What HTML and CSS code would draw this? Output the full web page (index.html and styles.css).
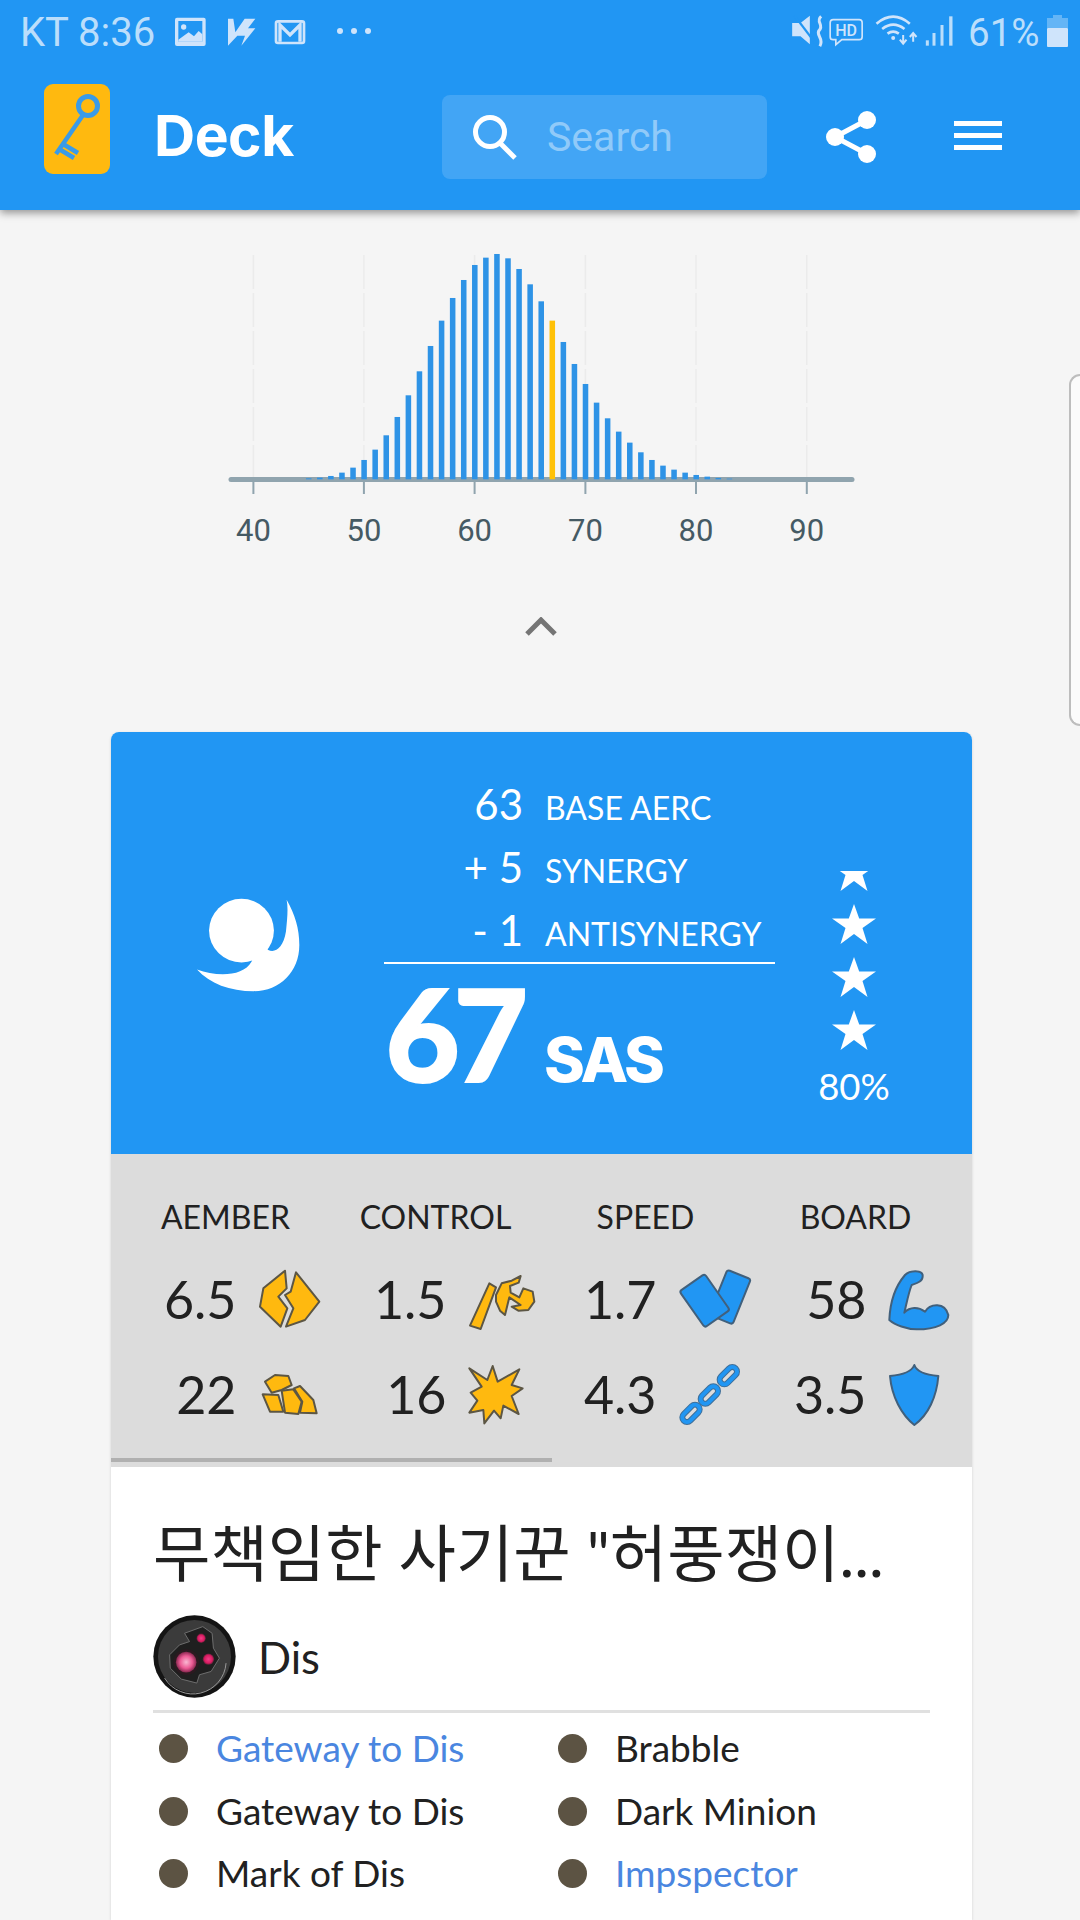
FILE: index.html
```html
<!DOCTYPE html>
<html lang="ko">
<head>
<meta charset="utf-8">
<title>Deck</title>
<link rel="stylesheet" href="styles.css">
</head>
<body>
<div class="page">
  <header class="appbar">
    <div class="status">
      <span class="status-text status-time">KT 8:36</span>
      <svg class="status-left" viewBox="525 50 600 90" aria-hidden="true">
        <rect x="525" y="52" width="92" height="85" rx="6" class="si"/>
        <rect x="535" y="62" width="72" height="62" fill="#2196f3"/>
        <circle cx="551" cy="80" r="8" class="si"/>
        <path d="M535 118 L566 96 L582 108 L596 92 L607 102 V124 H535Z" class="si"/>
        <path d="M684 55 H700 L706 96 L734 55 H766 L744 84 H766 L724 136 L735 106 H712 L684 136Z" class="si"/>
        <rect x="828" y="63" width="84" height="65" rx="6" fill="none" stroke="#cfe4fb" stroke-width="8"/>
        <path d="M840 124 V74 L870 104 L900 74 V124" fill="none" stroke="#cfe4fb" stroke-width="10"/>
        <circle cx="1020" cy="92" r="9" class="si"/><circle cx="1062" cy="92" r="9" class="si"/><circle cx="1104" cy="92" r="9" class="si"/>
      </svg>
      <svg class="status-right" viewBox="35 40 485 105" aria-hidden="true">
        <path d="M35 70 H60 L88 48 V134 L60 110 H35Z" class="si"/>
        <path d="M42 48 L112 140" stroke="#2196f3" stroke-width="7"/>
        <path d="M122 50 C104 66 132 76 116 92 C104 106 132 116 118 140" fill="none" stroke="#cfe4fb" stroke-width="9"/>
        <path d="M158 60 H236 Q245 60 245 69 V111 Q245 120 236 120 H184 L166 135 V120 H158 Q149 120 149 111 V69 Q149 60 158 60Z" fill="none" stroke="#cfe4fb" stroke-width="5"/>
        <text x="197" y="108" class="hd">HD</text>
        <path d="M288 72 Q338 30 388 72 M305 88 Q338 62 372 88 M321 102 Q338 90 355 102" fill="none" stroke="#cfe4fb" stroke-width="8"/>
        <circle cx="338" cy="115" r="6" class="si"/>
        <path d="M368 106 V130 M358 120 L368 132 L378 120 M398 126 V102 M388 112 L398 100 L408 112" fill="none" stroke="#cfe4fb" stroke-width="6"/>
        <rect x="436" y="122" width="9" height="16" class="sb"/><rect x="456" y="100" width="9" height="38" class="sb"/><rect x="480" y="76" width="9" height="62" class="sb"/><rect x="506" y="50" width="10" height="88" class="sb"/>
      </svg>
      <span class="status-text status-pct">61%</span>
      <svg class="battery" viewBox="0 0 21 32" aria-hidden="true">
        <rect x="6" y="0" width="9" height="4" fill="#64b5f6"/>
        <rect x="0" y="3" width="21" height="10" fill="#64b5f6"/>
        <rect x="0" y="13" width="21" height="19" rx="1" fill="#cfe4fb"/>
      </svg>
    </div>
    <div class="toolbar">
      <div class="logo">
        <svg viewBox="0 0 66 90" class="logo-key" aria-hidden="true">
          <circle cx="44" cy="22" r="9.5" fill="none" stroke="#3a9be8" stroke-width="5"/>
          <path d="M39 31 L12 70 M19 60 L34 69 M15 65 L30 74" fill="none" stroke="#3a9be8" stroke-width="4.5"/>
        </svg>
      </div>
      <div class="brand">Deck</div>
      <div class="search">
        <svg class="search-icon" viewBox="0 0 46 46" aria-hidden="true">
          <circle cx="18" cy="18" r="14.5" fill="none" stroke="#fff" stroke-width="5"/>
          <path d="M28 29 L43 44" stroke="#fff" stroke-width="5"/>
        </svg>
        <span class="search-text">Search</span>
      </div>
      <svg class="share" viewBox="0 0 50 54" aria-hidden="true">
        <path d="M41 10 L9 27 L41 44" fill="none" stroke="#fff" stroke-width="5"/>
        <circle cx="41" cy="10" r="9" fill="#fff"/><circle cx="9" cy="27" r="9" fill="#fff"/><circle cx="41" cy="44" r="9" fill="#fff"/>
      </svg>
      <div class="burger"><span></span><span></span><span></span></div>
    </div>
  </header>

  <svg class="chart" viewBox="0 210 1080 350" role="img" aria-label="SAS distribution">
    <g class="grid-lines">
      <path d="M253.4 255V480M363.9 255V480M474.6 255V480M585.4 255V480M696 255V480M806.8 255V480"/>
    </g>
    <path class="axis" d="M231 479.5H852"/>
    <g transform="translate(253.4 479.3) scale(11.07 -0.3333)" class="bars">
      <rect x="4.75" width=".5" height="3"/><rect x="5.75" width=".5" height="5"/><rect x="6.75" width=".5" height="10"/><rect x="7.75" width=".5" height="20"/><rect x="8.75" width=".5" height="35"/>
      <rect x="9.75" width=".5" height="58"/><rect x="10.75" width=".5" height="89"/><rect x="11.75" width=".5" height="132"/><rect x="12.75" width=".5" height="187"/><rect x="13.75" width=".5" height="252"/>
      <rect x="14.75" width=".5" height="324"/><rect x="15.75" width=".5" height="400"/><rect x="16.75" width=".5" height="476"/><rect x="17.75" width=".5" height="544"/><rect x="18.75" width=".5" height="598"/>
      <rect x="19.75" width=".5" height="643"/><rect x="20.75" width=".5" height="665"/><rect x="21.75" width=".5" height="676"/><rect x="22.75" width=".5" height="663"/><rect x="23.75" width=".5" height="631"/>
      <rect x="24.75" width=".5" height="585"/><rect x="25.75" width=".5" height="534"/><rect x="26.75" width=".5" height="476" class="bar-mark"/><rect x="27.75" width=".5" height="412"/><rect x="28.75" width=".5" height="346"/>
      <rect x="29.75" width=".5" height="286"/><rect x="30.75" width=".5" height="230"/><rect x="31.75" width=".5" height="183"/><rect x="32.75" width=".5" height="143"/><rect x="33.75" width=".5" height="110"/>
      <rect x="34.75" width=".5" height="81"/><rect x="35.75" width=".5" height="58"/><rect x="36.75" width=".5" height="41"/><rect x="37.75" width=".5" height="29"/><rect x="38.75" width=".5" height="20"/>
      <rect x="39.75" width=".5" height="13"/><rect x="40.75" width=".5" height="8"/><rect x="41.75" width=".5" height="4"/><rect x="42.75" width=".5" height="2"/>
    </g>
    <path class="ticks" d="M253.4 482V494M363.9 482V494M474.6 482V494M585.4 482V494M696 482V494M806.8 482V494"/>
    <g class="axis-labels">
      <text x="253.4" y="541">40</text><text x="364" y="541">50</text><text x="474.6" y="541">60</text><text x="585.4" y="541">70</text><text x="696" y="541">80</text><text x="806.8" y="541">90</text>
    </g>
  </svg>
  <div class="chevron-row">
    <svg class="chevron" viewBox="0 0 32 19" aria-hidden="true"><path d="M2 17 L16 3 L30 17" fill="none" stroke="#757575" stroke-width="5"/></svg>
  </div>

  <main class="card">
    <section class="score">
      <svg class="swirl" viewBox="52 50 308 280" aria-hidden="true">
        <ellipse cx="185" cy="147" rx="97" ry="95"/>
        <path d="M320 55 C345 100 358 140 358 190 C358 270 300 328 222 328 C150 328 90 305 52 263 C110 285 190 285 215 240 L240 180 L265 205 C285 215 310 200 318 150 C322 110 325 80 320 55Z"/>
      </svg>
      <div class="score-main">
        <div class="score-row"><span class="score-num">63</span><span class="score-label">BASE AERC</span></div>
        <div class="score-row"><span class="score-num">+ 5</span><span class="score-label">SYNERGY</span></div>
        <div class="score-row"><span class="score-num">- 1</span><span class="score-label">ANTISYNERGY</span></div>
        <div class="score-rule"></div>
        <div class="sas"><span class="sas-num">67</span><span class="sas-label">SAS</span></div>
      </div>
      <div class="rating">
        <svg class="star star-half" viewBox="0 20 44 20" aria-hidden="true"><polygon points="22,0 27.2,14.5 44,14.5 30.5,24 35.5,40 22,30 8.5,40 13.5,24 0,14.5 16.8,14.5"/></svg>
        <svg class="star" viewBox="0 0 44 40" aria-hidden="true"><polygon points="22,0 27.2,14.5 44,14.5 30.5,24 35.5,40 22,30 8.5,40 13.5,24 0,14.5 16.8,14.5"/></svg>
        <svg class="star" viewBox="0 0 44 40" aria-hidden="true"><polygon points="22,0 27.2,14.5 44,14.5 30.5,24 35.5,40 22,30 8.5,40 13.5,24 0,14.5 16.8,14.5"/></svg>
        <svg class="star" viewBox="0 0 44 40" aria-hidden="true"><polygon points="22,0 27.2,14.5 44,14.5 30.5,24 35.5,40 22,30 8.5,40 13.5,24 0,14.5 16.8,14.5"/></svg>
        <span class="rating-pct">80%</span>
      </div>
    </section>

    <section class="stats">
      <div class="stat-grid">
        <div class="stat-head">AEMBER</div><div class="stat-head">CONTROL</div><div class="stat-head">SPEED</div><div class="stat-head">BOARD</div>

        <div class="stat"><span class="stat-num">6.5</span>
          <svg class="ic gold" viewBox="15 81 228 198" aria-hidden="true"><path d="M105 92 L40 145 L30 200 L92 260 L112 205 L85 170 L110 145Z"/><path d="M138 97 L122 155 L105 165 L130 205 L108 260 L165 240 L208 185Z"/></svg>
        </div>
        <div class="stat"><span class="stat-num">1.5</span>
          <svg class="ic gold" viewBox="645 81 228 198" aria-hidden="true"><path d="M718 130 L738 142 L692 267 L660 257Z"/><path d="M738 165 L755 130 L785 122 L812 108 L806 128 L780 138 L782 158 L808 172 L820 145 L848 155 L853 185 L835 210 L805 212 L785 200 L812 195 L778 172 L765 225 L750 212 L738 185Z"/></svg>
        </div>
        <div class="stat"><span class="stat-num">1.7</span>
          <svg class="ic blue" viewBox="45 81 228 198" aria-hidden="true"><rect x="172" y="100" width="76" height="146" rx="8" transform="rotate(22 215 172)"/><rect x="88" y="116" width="92" height="132" rx="8" transform="rotate(-35 134 182)"/></svg>
        </div>
        <div class="stat"><span class="stat-num">58</span>
          <svg class="ic blue" viewBox="675 81 228 198" aria-hidden="true"><path d="M688 240 C690 190 705 140 735 105 C750 90 785 90 788 105 C790 125 770 130 755 135 C745 160 740 190 733 218 C750 200 775 200 795 215 C810 190 855 185 865 225 C865 250 830 268 770 268 C740 268 705 255 688 240Z"/></svg>
        </div>

        <div class="stat"><span class="stat-num">22</span>
          <svg class="ic gold" viewBox="15 366 228 198" aria-hidden="true"><path d="M45 425 L75 405 L115 408 L125 435 L95 450 L65 458Z"/><path d="M38 463 L85 465 L100 515 L60 515Z"/><path d="M132 445 L150 438 L190 480 L200 520 L150 518 L157 485Z"/><path d="M95 452 L130 448 L155 485 L145 522 L105 518Z"/></svg>
        </div>
        <div class="stat"><span class="stat-num">16</span>
          <svg class="ic gold" viewBox="645 366 228 198" aria-hidden="true"><path d="M728 378 L743 425 L808 388 L785 435 L818 445 L785 468 L806 522 L760 497 L752 535 L732 512 L703 550 L700 510 L658 518 L682 482 L662 458 L695 440 L658 385 L712 420Z"/></svg>
        </div>
        <div class="stat"><span class="stat-num">4.3</span>
          <svg class="ic chain" viewBox="45 366 228 198" aria-hidden="true">
            <g class="chain-out"><rect x="174" y="393" width="62" height="28" rx="14" transform="rotate(-45 205 407)"/><rect x="117" y="451" width="62" height="28" rx="14" transform="rotate(-45 148 465)"/><rect x="62" y="506" width="62" height="28" rx="14" transform="rotate(-45 93 520)"/></g>
            <g class="chain-in"><rect x="174" y="393" width="62" height="28" rx="14" transform="rotate(-45 205 407)"/><rect x="117" y="451" width="62" height="28" rx="14" transform="rotate(-45 148 465)"/><rect x="62" y="506" width="62" height="28" rx="14" transform="rotate(-45 93 520)"/></g>
          </svg>
        </div>
        <div class="stat"><span class="stat-num">3.5</span>
          <svg class="ic blue" viewBox="675 366 228 198" aria-hidden="true"><path d="M763 375 C770 395 800 405 835 408 C830 470 805 525 763 555 C725 525 695 470 690 408 C725 405 755 395 763 375Z"/></svg>
        </div>
      </div>
      <div class="scroll-thumb"></div>
    </section>

    <section class="info">
      <h1 class="title">무책임한 사기꾼 "허풍쟁이...</h1>
      <div class="house">
        <svg class="house-icon" viewBox="40 45 250 250" aria-hidden="true">
          <defs>
            <radialGradient id="pinkBig"><stop offset="0" stop-color="#f9b8d2"/><stop offset=".6" stop-color="#ec5a94"/><stop offset="1" stop-color="#8a2850"/></radialGradient>
            <radialGradient id="pinkSmall"><stop offset="0" stop-color="#f0408a"/><stop offset=".7" stop-color="#d81b60"/><stop offset="1" stop-color="#5a2036"/></radialGradient>
          </defs>
          <circle cx="165" cy="170" r="124" fill="#141414"/>
          <circle cx="165" cy="170" r="110" fill="#3b3b3b"/>
          <path d="M75 235 A100 100 0 0 0 260 190" fill="none" stroke="#9a9a9a" stroke-width="3"/>
          <path d="M135 100 L190 80 L218 100 L222 145 L240 175 L215 215 L180 225 L172 250 L125 238 L92 205 L90 165 L120 135 L150 125Z" fill="#1f1f1f" stroke="#6e6e6e" stroke-width="3"/>
          <circle cx="140" cy="187" r="39" fill="#2b1a20"/>
          <circle cx="140" cy="187" r="31" fill="url(#pinkBig)"/>
          <circle cx="207" cy="178" r="17" fill="url(#pinkSmall)"/>
          <circle cx="185" cy="115" r="14" fill="url(#pinkSmall)"/>
        </svg>
        <span class="house-name">Dis</span>
      </div>
      <div class="divider"></div>
      <ul class="cards">
        <li class="card-item"><span class="dot"></span><span class="maverick">Gateway to Dis</span></li>
        <li class="card-item"><span class="dot"></span><span>Brabble</span></li>
        <li class="card-item"><span class="dot"></span><span>Gateway to Dis</span></li>
        <li class="card-item"><span class="dot"></span><span>Dark Minion</span></li>
        <li class="card-item"><span class="dot"></span><span>Mark of Dis</span></li>
        <li class="card-item"><span class="dot"></span><span class="maverick">Impspector</span></li>
      </ul>
    </section>
  </main>
  <div class="edge-handle"></div>
</div>
</body>
</html>
```
FILE: styles.css
```css
* { box-sizing: border-box; }
html, body { margin: 0; padding: 0; }
body { background: #f5f5f5; font-family: "Lato", "Noto Sans CJK KR", sans-serif; color: #212121; }
.page { position: relative; width: 1080px; height: 1920px; overflow: hidden; }

.appbar { position: relative; z-index: 2; height: 210px; background: #2196f3; box-shadow: 0 3px 8px rgba(0,0,0,.4); }
.status { height: 65px; display: flex; align-items: flex-start; padding: 0 11px 0 20px; }
.status-text { font-family: "Roboto", sans-serif; font-weight: 400; font-size: 40px; line-height: 44px; margin-top: 11px; color: #bbdefb; white-space: nowrap; }
.status-time { width: 155px; }
.status-left { width: 200px; height: 30px; margin-top: 17px; }
.status-right { width: 162px; height: 35px; margin-top: 13px; margin-left: 417px; }
.status-pct { margin-left: 14px; width: 79px; font-size: 38.5px; }
.battery { width: 21px; height: 32px; margin-top: 15px; }
.si { fill: #cfe4fb; }
.sb { fill: #bbdefb; }
.hd { font-family: "Roboto", sans-serif; font-size: 48px; font-weight: 500; fill: #cfe4fb; text-anchor: middle; }

.toolbar { display: flex; align-items: flex-start; height: 145px; padding-left: 44px; }
.logo { width: 66px; height: 90px; margin-top: 19px; background: #ffb90f; border-radius: 9px; }
.logo-key { display: block; width: 66px; height: 90px; }
.brand { width: 288px; margin-left: 44px; margin-top: 35px; font-family: "Inter", sans-serif; font-weight: 700; font-size: 57px; line-height: 72px; color: #fff; letter-spacing: -.5px; }
.search { display: flex; align-items: center; width: 325px; height: 84px; margin-top: 30px; background: #42a5f5; border-radius: 8px; padding-left: 30px; }
.search-icon { width: 46px; height: 46px; flex: none; }
.search-text { margin-left: 29px; font-family: "Roboto", sans-serif; font-size: 41px; color: #90caf9; }
.share { width: 50px; height: 54px; margin-left: 59px; margin-top: 45px; flex: none; }
.burger { width: 48px; margin-left: 78px; margin-top: 56px; display: flex; flex-direction: column; gap: 7px; }
.burger span { display: block; height: 5px; background: #fff; }

.chart { display: block; width: 1080px; height: 350px; }
.grid-lines path { stroke: #ebebeb; stroke-width: 1.5; stroke-dasharray: 34 4; fill: none; }
.bars rect { fill: #2e93e6; }
.bars .bar-mark { fill: #ffc107; }
.axis { stroke: #90a4ae; stroke-width: 5; stroke-linecap: round; fill: none; }
.ticks { stroke: #90a4ae; stroke-width: 2; fill: none; }
.axis-labels text { font-family: "Roboto", sans-serif; font-size: 31px; fill: #455a64; text-anchor: middle; }
.chevron-row { display: flex; justify-content: center; margin-top: 57px; padding-left: 2px; }
.chevron { width: 32px; height: 19px; display: block; }

.card { width: 861px; margin: 96px 0 0 111px; border-radius: 8px 8px 0 0; overflow: hidden; background: #fff; box-shadow: 0 1px 3px rgba(0,0,0,.15); }
.score { display: flex; align-items: flex-start; height: 422px; background: #2196f3; color: #fff; padding-left: 86px; }
.swirl { width: 103px; height: 96px; margin-top: 165px; flex: none; fill: #fff; }
.score-main { width: 391px; margin-left: 84px; padding-top: 41px; flex: none; }
.score-row { display: grid; grid-template-columns: 139px 1fr; column-gap: 22px; height: 63px; line-height: 63px; align-items: baseline; }
.score-num { text-align: right; font-size: 42px; font-weight: 400; }
.score-label { font-size: 32px; font-weight: 400; white-space: nowrap; }
.score-rule { height: 2px; background: #fff; }
.sas { display: grid; grid-template-columns: 138px 1fr; column-gap: 22px; align-items: baseline; line-height: 138px; }
.sas-num { font-size: 128px; font-weight: 900; text-align: right; letter-spacing: -6px; -webkit-text-stroke: 2px #fff; }
.sas-label { font-family: "Inter", sans-serif; font-size: 62px; font-weight: 800; letter-spacing: -3px; }
.rating { width: 70px; margin-left: 44px; padding-top: 139px; display: flex; flex-direction: column; align-items: center; flex: none; }
.star { display: block; width: 44px; height: 40px; fill: #fff; margin-bottom: 13px; flex: none; }
.star-half { height: 20px; }
.rating-pct { font-size: 36.5px; line-height: 42px; white-space: nowrap; margin-top: 2px; }

.stats { background: #dcdcdc; height: 313px; padding-top: 45px; }
.stat-grid { display: grid; grid-template-columns: repeat(4, 210px); grid-template-rows: 36px 95px 95px; padding-left: 9.5px; }
.stat-head { font-size: 32px; line-height: 36px; text-align: center; }
.stat { display: flex; align-items: flex-start; padding-top: 32px; }
.stat-num { width: 116px; flex: none; text-align: right; font-size: 52px; line-height: 64px; color: #212121; }
.ic { width: 76px; height: 66px; margin-left: 18.5px; flex: none; overflow: visible; stroke-linejoin: round; }
.gold path { fill: #ffb90f; stroke: #5c5644; stroke-width: 6; }
.blue path, .blue rect { fill: #2196f3; stroke: #41607c; stroke-width: 6; }
.chain rect { fill: none; }
.chain-out rect { stroke: #3f6f99; stroke-width: 18; }
.chain-in rect { stroke: #2196f3; stroke-width: 12; }
.scroll-thumb { width: 441px; height: 4px; margin-top: 33px; background: #b0b0b0; }

.info { padding: 0 42px; height: 453px; }
.title { margin: 0; padding-top: 44px; font-size: 62.4px; line-height: 84px; font-weight: 400; color: #212121; white-space: nowrap; }
.house { display: flex; align-items: center; margin-top: 20px; height: 83px; }
.house-icon { width: 83px; height: 83px; flex: none; }
.house-name { margin-left: 22px; font-size: 43.5px; color: #212121; }
.divider { height: 3px; background: #e0e0e0; margin-top: 12px; }
.cards { list-style: none; margin: 12px 0 0; padding: 0 0 0 6px; display: grid; grid-template-columns: 399px 1fr; grid-auto-rows: 62.5px; }
.card-item { display: flex; align-items: flex-start; font-size: 37px; line-height: 46px; color: #212121; }
.dot { width: 29px; height: 29px; border-radius: 50%; background: #5c5343; margin: 9px 28px 0 0; flex: none; }
.maverick { color: #4a86e0; }

.edge-handle { position: absolute; top: 374px; right: 0; width: 11px; height: 352px; background: #fbfbfb; border: 2px solid #bdbdbd; border-right: 0; border-radius: 12px 0 0 12px; }
```
